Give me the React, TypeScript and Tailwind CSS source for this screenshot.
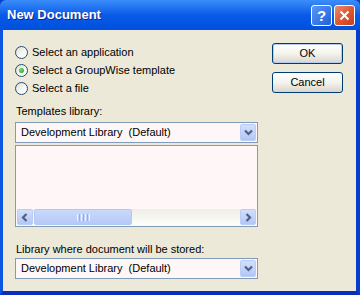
import React from "react";

const font = "font-['Liberation_Sans',Arial,sans-serif]";

function Chevron({ dir }: { dir: "down" | "left" | "right" }) {
  const d =
    dir === "down"
      ? "M1 1.5 L4.5 5 L8 1.5"
      : dir === "left"
      ? "M5.5 1 L2 4.5 L5.5 8"
      : "M2.5 1 L6 4.5 L2.5 8";
  const w = dir === "down" ? 9 : 8;
  const h = dir === "down" ? 7 : 9;
  return (
    <svg width={w} height={h} viewBox={`0 0 ${w} ${h}`}>
      <path d={d} fill="none" stroke="#4D6185" strokeWidth="2.2" />
    </svg>
  );
}

function BlueButton({ dir, className = "" }: { dir: "down" | "left" | "right"; className?: string }) {
  return (
    <div
      className={`flex items-center justify-center rounded-[2px] border border-[#BBCCF5] bg-gradient-to-b from-[#D2DEFD] to-[#B3C7F6] ${className}`}
    >
      <Chevron dir={dir} />
    </div>
  );
}

function Radio({ label, checked = false }: { label: string; checked?: boolean }) {
  return (
    <div className="flex h-[18px] items-center gap-[4px]">
      <div className="flex h-[13px] w-[13px] items-center justify-center rounded-full border border-[#1C5180] bg-gradient-to-br from-[#DCD9CF] via-[#F6F5F1] to-white">
        {checked && (
          <div className="h-[5px] w-[5px] rounded-full bg-[radial-gradient(circle_at_40%_40%,#62E162,#21A121)]" />
        )}
      </div>
      <span className="text-[11px] leading-[13px] text-black">{label}</span>
    </div>
  );
}

function Dropdown({ value }: { value: string }) {
  return (
    <div className="flex h-[21px] w-[243px] items-center border border-[#7F9DB9] bg-[#FFF7F7] p-[1px]">
      <span className="flex-1 whitespace-pre pl-[4px] text-[11px] leading-[13px] text-black">{value}</span>
      <BlueButton dir="down" className="h-[17px] w-[16px]" />
    </div>
  );
}

function PushButton({ label, isDefault = false }: { label: string; isDefault?: boolean }) {
  return (
    <div
      className={`flex h-[21px] w-[71px] items-center justify-center rounded-[3px] border border-[#003C74] bg-gradient-to-b from-white via-[#F4F3EE] to-[#D9D5CA] text-[11px] leading-[13px] text-black ${
        isDefault ? "shadow-[inset_0_0_0_1px_#B7CCF3]" : ""
      }`}
    >
      {label}
    </div>
  );
}

export default function App() {
  return (
    <div className={`flex h-[295px] w-[360px] flex-col bg-[#0A3FC9] ${font}`}>
      <div className="flex h-[30px] items-center rounded-t-[6px] bg-gradient-to-b from-[#3B8DFB] via-[#0A5AE8] to-[#0050DE] pl-[7px] pr-[5px]">
        <span className="flex-1 text-[13px] font-bold text-white [text-shadow:1px_1px_#0A2A8A]">New Document</span>
        <div className="flex gap-[2px]">
          <div className="flex h-[21px] w-[21px] items-center justify-center rounded-[3px] border border-white bg-gradient-to-br from-[#5A98F7] to-[#1F5EDB] text-[15px] font-bold leading-none text-white">
            ?
          </div>
          <div className="flex h-[21px] w-[21px] items-center justify-center rounded-[3px] border border-white bg-gradient-to-br from-[#EA8B6F] via-[#E0582F] to-[#C4401C]">
            <svg width="11" height="11" viewBox="0 0 11 11">
              <path d="M1.5 1.5 L9.5 9.5 M9.5 1.5 L1.5 9.5" stroke="white" strokeWidth="2" />
            </svg>
          </div>
        </div>
      </div>

      <div className="flex flex-1 border-b-[4px] border-l-[3px] border-r-[4px] border-b-[#0A2CC2] border-l-[#0B55E0] border-r-[#0A3BCF] bg-[#ECE9D8] pl-[12px] pt-[13px]">
        <div className="flex w-[243px] flex-col">
          <Radio label="Select an application" />
          <Radio label="Select a GroupWise template" checked />
          <Radio label="Select a file" />

          <div className="mt-[8px] pl-[1px] text-[11px] leading-[13px] text-black">Templates library:</div>
          <div className="mt-[4px]">
            <Dropdown value="Development Library  (Default)" />
          </div>

          <div className="mt-[2px] flex h-[82px] flex-col border border-[#7F9DB9] bg-[#FFF7F7] p-[1px]">
            <div className="flex-1" />
            <div className="flex h-[16px] bg-gradient-to-b from-[#EEEDE5] to-[#FEFEFB]">
              <BlueButton dir="left" className="w-[16px]" />
              <div className="ml-[1px] flex w-[98px] items-center justify-center rounded-[2px] border border-[#B5C8F4] bg-gradient-to-b from-[#CAD8FC] to-[#B6C9F7]">
                <div className="flex gap-[1px]">
                  <div className="h-[7px] w-[1px] bg-[#EEF4FE]" />
                  <div className="h-[7px] w-[1px] bg-[#8CB0F8]" />
                  <div className="h-[7px] w-[1px] bg-[#EEF4FE]" />
                  <div className="h-[7px] w-[1px] bg-[#8CB0F8]" />
                  <div className="h-[7px] w-[1px] bg-[#EEF4FE]" />
                  <div className="h-[7px] w-[1px] bg-[#8CB0F8]" />
                  <div className="h-[7px] w-[1px] bg-[#EEF4FE]" />
                </div>
              </div>
              <div className="flex-1" />
              <BlueButton dir="right" className="w-[16px]" />
            </div>
          </div>

          <div className="mt-[16px] pl-[1px] text-[11px] leading-[13px] text-black">
            Library where document will be stored:
          </div>
          <div className="mt-[2px]">
            <Dropdown value="Development Library  (Default)" />
          </div>
        </div>

        <div className="ml-[14px] flex flex-col gap-[8px]">
          <PushButton label="OK" isDefault />
          <PushButton label="Cancel" />
        </div>
      </div>
    </div>
  );
}
